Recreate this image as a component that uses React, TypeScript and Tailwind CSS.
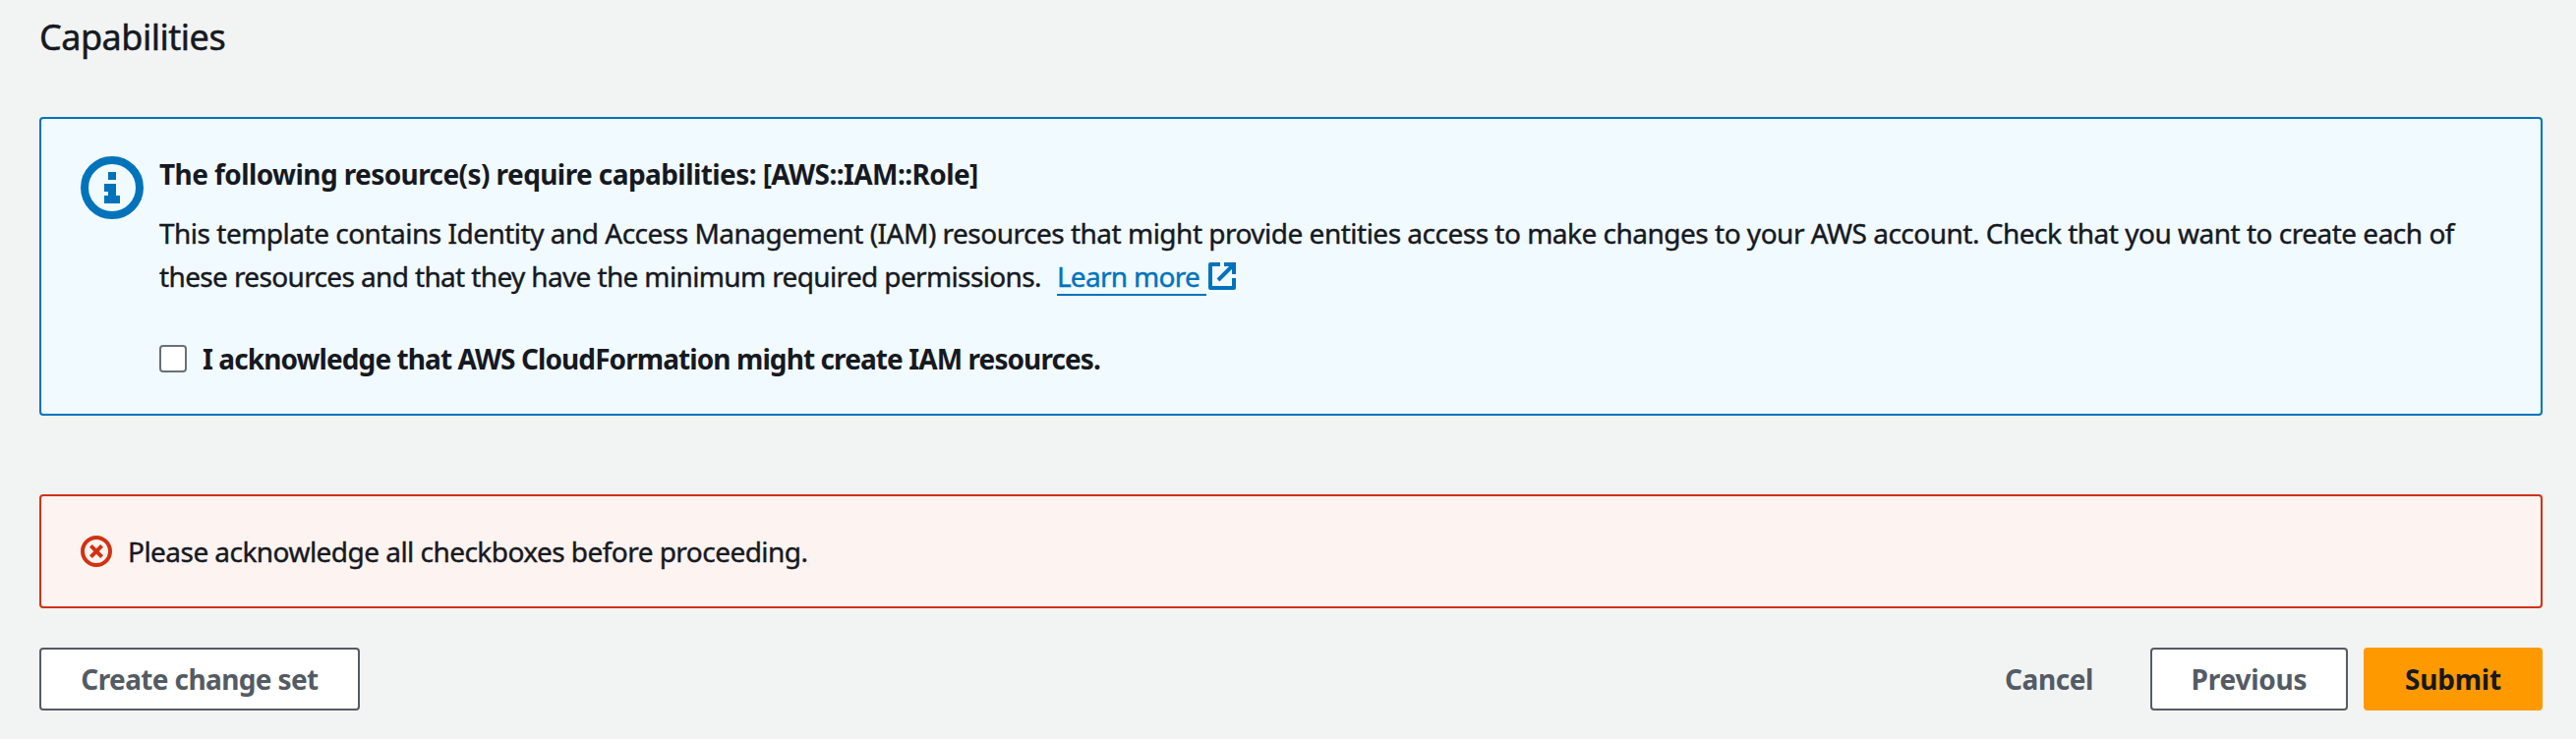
import React from "react";

function InfoIcon() {
  return (
    <svg viewBox="0 0 64 64" className="mt-1 size-16 shrink-0" fill="#0073bb" aria-hidden="true">
      <circle cx="32" cy="32" r="28" fill="none" stroke="#0073bb" strokeWidth="8" />
      <path d="M28 16h8v8h-8zM24 28h12v12h4v8H24v-8h4v-4h-4z" shapeRendering="crispEdges" />
    </svg>
  );
}

function ErrorIcon() {
  return (
    <svg viewBox="0 0 32 32" className="mt-1.5 size-8 shrink-0" fill="none" stroke="#d13212" strokeWidth="4" aria-hidden="true">
      <circle cx="16" cy="16" r="14" />
      <path d="M10.4 10.4l11.2 11.2M21.6 10.4L10.4 21.6" />
    </svg>
  );
}

function ExternalIcon() {
  return (
    <svg viewBox="0 0 28 28" className="ml-0.5 inline-block size-7 align-[-3px]" fill="none" stroke="#0073bb" strokeWidth="4" aria-hidden="true">
      <path d="M12 2H2v24h24V16" strokeLinejoin="round" />
      <path d="M16 2h10v10M25 3L10 18" />
    </svg>
  );
}

export default function App() {
  return (
    <main className="h-[752px] w-[2620px] overflow-hidden bg-[#f2f3f3] pt-4 pr-[34px] pl-10 font-['Noto_Sans','Open_Sans',sans-serif] text-[28px] leading-[44px] text-[#16191f]">
      <h2 className="text-[36px] leading-[44px] tracking-[-0.5px] [-webkit-text-stroke:0.5px]">Capabilities</h2>

      <section className="mt-[59px] flex h-[304px] gap-4 rounded-[4px] border-2 border-[#0073bb] bg-[#f1faff] px-10 pt-[34px]">
        <InfoIcon />
        <div className="whitespace-nowrap">
          <h3 className="font-bold tracking-[-0.58px]">The following resource(s) require capabilities: [AWS::IAM::Role]</h3>
          <p className="mt-4 [-webkit-text-stroke:0.4px]">
            <span className="tracking-[-0.5px]">
              This template contains Identity and Access Management (IAM) resources that might provide entities access to make changes to your AWS account. Check that you want to create each of
            </span>
            <br />
            <span className="tracking-[-0.634px]">these resources and that they have the minimum required permissions.</span>
            <a href="#" className="ml-4 text-[#0073bb]">
              <span className="inline-block h-10 w-[152px] border-b-2 border-[#0073bb] leading-10 tracking-[-0.7px]">Learn more</span>
              <ExternalIcon />
            </a>
          </p>
          <label className="mt-10 flex">
            <input type="checkbox" className="mt-2 size-7 shrink-0 appearance-none rounded-[4px] border-2 border-[#687078] bg-white" />
            <span className="ml-4 font-bold tracking-[-0.91px]">I acknowledge that AWS CloudFormation might create IAM resources.</span>
          </label>
        </div>
      </section>

      <section className="mt-20 flex h-[116px] gap-4 rounded-[4px] border-2 border-[#d13212] bg-[#fdf3f1] px-10 pt-[34px]">
        <ErrorIcon />
        <p className="tracking-[-0.54px] [-webkit-text-stroke:0.4px]">Please acknowledge all checkboxes before proceeding.</p>
      </section>

      <footer className="mt-10 flex h-16 items-stretch whitespace-nowrap font-bold text-[#545b64]">
        <button className="flex w-[326px] justify-center rounded-[4px] border-2 border-[#545b64] bg-white pt-2 tracking-[-0.62px]">Create change set</button>
        <button className="ml-auto flex w-[172px] justify-center pt-[10px] tracking-[-0.42px]">Cancel</button>
        <button className="ml-[17px] flex w-[201px] justify-center rounded-[4px] border-2 border-[#545b64] bg-white pt-2 tracking-[-0.22px]">Previous</button>
        <button className="ml-4 flex w-[182px] justify-center rounded-[4px] bg-[#ff9900] pt-[10px] tracking-[-0.2px] text-[#16191f]">Submit</button>
      </footer>
    </main>
  );
}
